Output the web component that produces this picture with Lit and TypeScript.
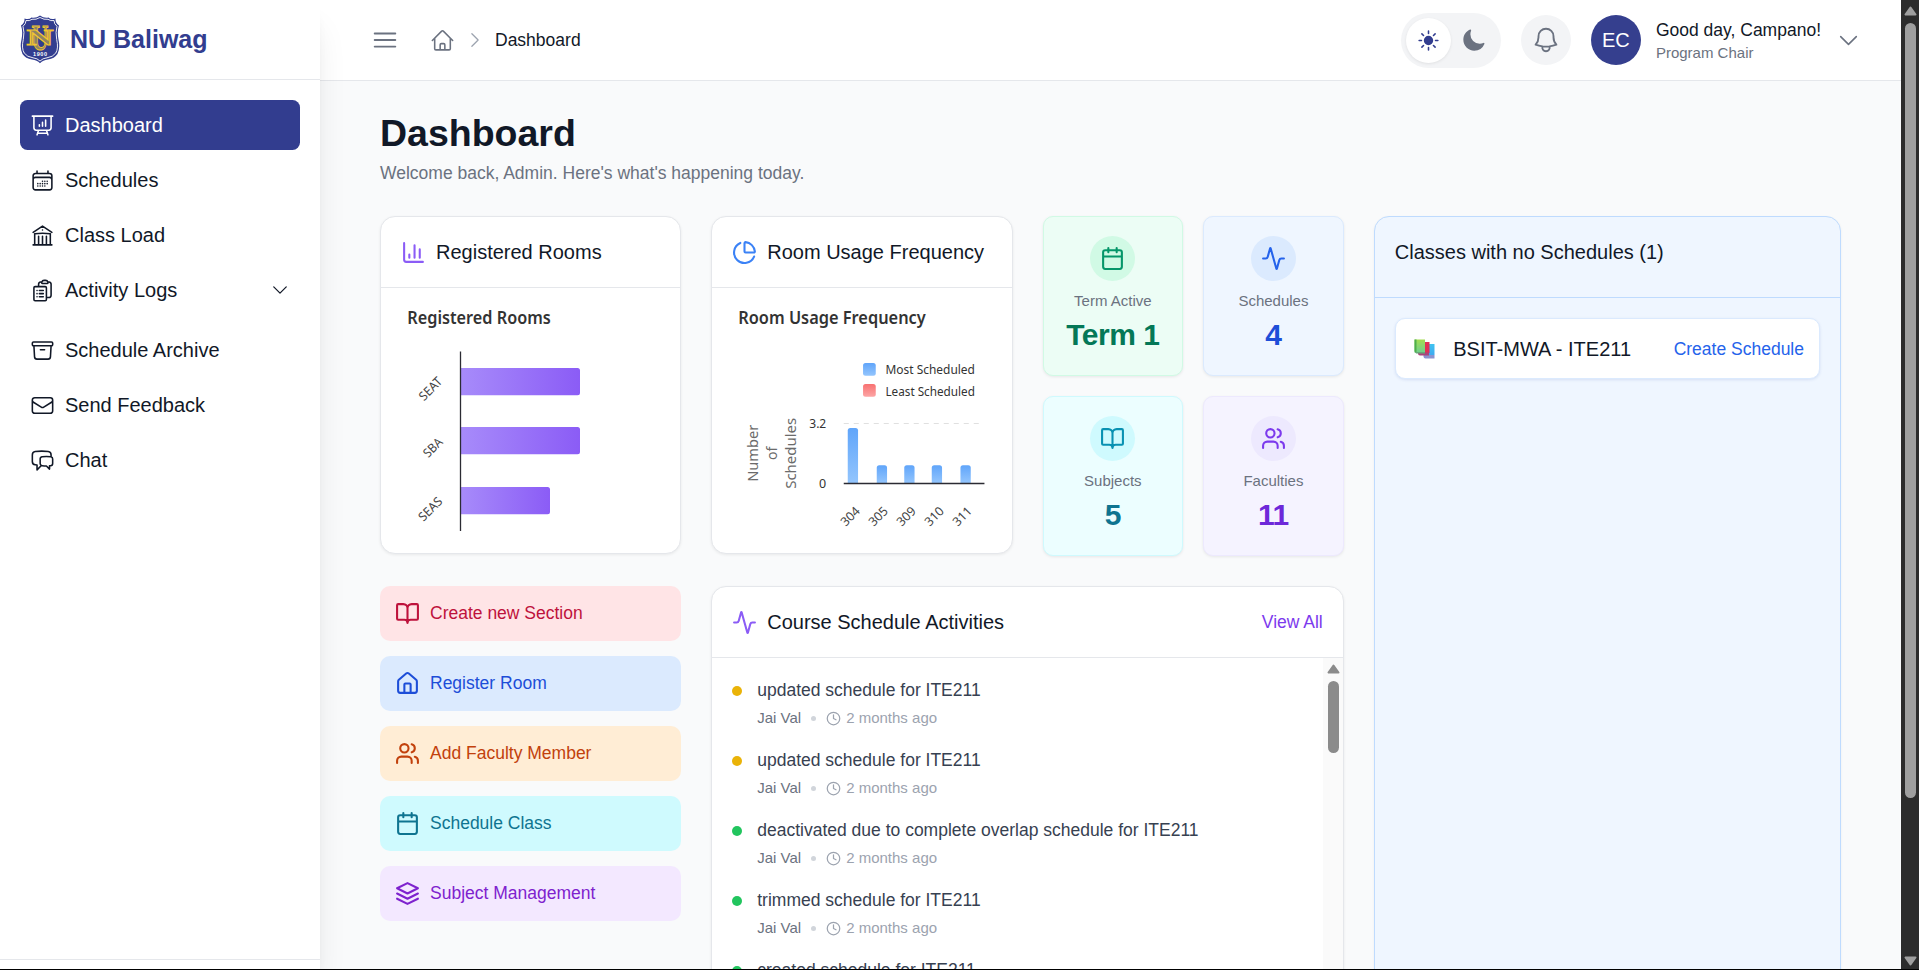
import { LitElement, html, css, svg, nothing } from "lit";
import { customElement, property } from "lit/decorators.js";

/* Outline icons, 24px grid, 1.5 stroke */
const hero: Record<string, string> = {
  presentation:
    "M3.75 3v11.25A2.25 2.25 0 0 0 6 16.5h2.25M3.75 3h-1.5m1.5 0h16.5m0 0h1.5m-1.5 0v11.25A2.25 2.25 0 0 1 18 16.5h-2.25m-7.5 0h7.5m-7.5 0-1 3m8.5-3 1 3m0 0 .5 1.5m-.5-1.5h-9.5m0 0-.5 1.5M9 11.25v1.5M12 9v3.75m3-6v6",
  calendarDays:
    "M6.75 3v2.25M17.25 3v2.25M3 18.75V7.5a2.25 2.25 0 0 1 2.25-2.25h13.5A2.25 2.25 0 0 1 21 7.5v11.25m-18 0A2.25 2.25 0 0 0 5.25 21h13.5A2.25 2.25 0 0 0 21 18.75m-18 0v-7.5A2.25 2.25 0 0 1 5.25 9h13.5A2.25 2.25 0 0 1 21 11.25v7.5m-9-6h.008v.008H12v-.008ZM12 15h.008v.008H12V15Zm0 2.25h.008v.008H12v-.008ZM9.75 15h.008v.008H9.75V15Zm0 2.25h.008v.008H9.75v-.008ZM7.5 15h.008v.008H7.5V15Zm0 2.25h.008v.008H7.5v-.008Zm6.75-4.5h.008v.008h-.008v-.008Zm0 2.25h.008v.008h-.008V15Zm0 2.25h.008v.008h-.008v-.008Zm2.25-4.5h.008v.008H16.5v-.008Zm0 2.25h.008v.008H16.5V15Z",
  library:
    "M12 21v-8.25M15.75 21v-8.25M8.25 21v-8.25M3 9l9-6 9 6m-1.5 12V10.332A48.36 48.36 0 0 0 12 9.75c-2.551 0-5.056.2-7.5.582V21M3 21h18M12 6.75h.008v.008H12V6.75Z",
  clipboard:
    "M9 12h3.75M9 15h3.75M9 18h3.75m3 .75H18a2.25 2.25 0 0 0 2.25-2.25V6.108c0-1.135-.845-2.098-1.976-2.192a48.424 48.424 0 0 0-1.123-.08m-5.801 0c-.065.21-.1.433-.1.664 0 .414.336.75.75.75h4.5a.75.75 0 0 0 .75-.75 2.25 2.25 0 0 0-.1-.664m-5.8 0A2.251 2.251 0 0 1 13.5 2.25H15c1.012 0 1.867.668 2.15 1.586m-5.8 0c-.376.023-.75.05-1.124.08C9.095 4.01 8.25 4.973 8.25 6.108V8.25m0 0H4.875c-.621 0-1.125.504-1.125 1.125v11.25c0 .621.504 1.125 1.125 1.125h9.75c.621 0 1.125-.504 1.125-1.125V9.375c0-.621-.504-1.125-1.125-1.125H8.25ZM6.75 12h.008v.008H6.75V12Zm0 3h.008v.008H6.75V15Zm0 3h.008v.008H6.75V18Z",
  archive:
    "m20.25 7.5-.625 10.632a2.25 2.25 0 0 1-2.247 2.118H6.622a2.25 2.25 0 0 1-2.247-2.118L3.75 7.5M10 11.25h4M3.375 7.5h17.25c.621 0 1.125-.504 1.125-1.125v-1.5c0-.621-.504-1.125-1.125-1.125H3.375c-.621 0-1.125.504-1.125 1.125v1.5c0 .621.504 1.125 1.125 1.125Z",
  envelope:
    "M21.75 6.75v10.5a2.25 2.25 0 0 1-2.25 2.25h-15a2.25 2.25 0 0 1-2.25-2.25V6.75m19.5 0A2.25 2.25 0 0 0 19.5 4.5h-15a2.25 2.25 0 0 0-2.25 2.25m19.5 0v.243a2.25 2.25 0 0 1-1.07 1.916l-7.5 4.615a2.25 2.25 0 0 1-2.36 0L3.32 8.91a2.25 2.25 0 0 1-1.07-1.916V6.75",
  chat:
    "M20.25 8.511c.884.284 1.5 1.128 1.5 2.097v4.286c0 1.136-.847 2.1-1.98 2.193-.34.027-.68.052-1.02.072v3.091l-3-3c-1.354 0-2.694-.055-4.02-.163a2.115 2.115 0 0 1-.825-.242m9.345-8.334a2.126 2.126 0 0 0-.476-.095 48.64 48.64 0 0 0-8.048 0c-1.131.094-1.976 1.057-1.976 2.192v4.286c0 .837.46 1.58 1.155 1.951m9.345-8.334V6.637c0-1.621-1.152-3.026-2.76-3.235A48.455 48.455 0 0 0 11.25 3c-2.115 0-4.198.137-6.24.402-1.608.209-2.76 1.614-2.76 3.235v6.226c0 1.621 1.152 3.026 2.76 3.235.577.075 1.157.14 1.74.194V21l4.155-4.155",
  home:
    "m2.25 12 8.954-8.955c.44-.439 1.152-.439 1.591 0L21.75 12M4.5 9.75v10.125c0 .621.504 1.125 1.125 1.125H9.75v-4.875c0-.621.504-1.125 1.125-1.125h2.25c.621 0 1.125.504 1.125 1.125V21h4.125c.621 0 1.125-.504 1.125-1.125V9.75M8.25 21h8.25",
  bars: "M3.75 6.75h16.5M3.75 12h16.5m-16.5 5.25h16.5",
  bell:
    "M14.857 17.082a23.848 23.848 0 0 0 5.454-1.31A8.967 8.967 0 0 1 18 9.75V9A6 6 0 0 0 6 9v.75a8.967 8.967 0 0 1-2.312 6.022c1.733.64 3.56 1.085 5.455 1.31m5.714 0a24.255 24.255 0 0 1-5.714 0m5.714 0a3 3 0 1 1-5.714 0",
  chevronDown: "m19.5 8.25-7.5 7.5-7.5-7.5",
  chevronRight: "m8.25 4.5 7.5 7.5-7.5 7.5",
};

/* Filled icons */
const solid: Record<string, string> = {
  sun: "M12 2.25a.75.75 0 0 1 .75.75v2.25a.75.75 0 0 1-1.5 0V3a.75.75 0 0 1 .75-.75ZM7.5 12a4.5 4.5 0 1 1 9 0 4.5 4.5 0 0 1-9 0ZM18.894 6.166a.75.75 0 0 0-1.06-1.06l-1.591 1.59a.75.75 0 1 0 1.06 1.061l1.591-1.59ZM21.75 12a.75.75 0 0 1-.75.75h-2.25a.75.75 0 0 1 0-1.5H21a.75.75 0 0 1 .75.75ZM17.834 18.894a.75.75 0 0 0 1.06-1.06l-1.59-1.591a.75.75 0 1 0-1.061 1.06l1.59 1.591ZM12 18a.75.75 0 0 1 .75.75V21a.75.75 0 0 1-1.5 0v-2.25A.75.75 0 0 1 12 18ZM7.758 17.303a.75.75 0 0 0-1.061-1.06l-1.591 1.59a.75.75 0 0 0 1.06 1.061l1.591-1.59ZM6 12a.75.75 0 0 1-.75.75H3a.75.75 0 0 1 0-1.5h2.25A.75.75 0 0 1 6 12ZM6.697 7.757a.75.75 0 0 0 1.06-1.06l-1.59-1.591a.75.75 0 0 0-1.061 1.06l1.59 1.591Z",
  moon: "M9.528 1.718a.75.75 0 0 1 .162.819A8.97 8.97 0 0 0 9 6a9 9 0 0 0 9 9 8.97 8.97 0 0 0 3.463-.69.75.75 0 0 1 .981.98 10.503 10.503 0 0 1-9.694 6.46c-5.799 0-10.5-4.7-10.5-10.5 0-4.368 2.667-8.112 6.46-9.694a.75.75 0 0 1 .818.162Z",
};

/* Outline icons, 24px grid, 2 stroke */
const lucide: Record<string, string> = {
  chart: "M3 3v16a2 2 0 0 0 2 2h16M18 17V9M13 17V5M8 17v-3",
  pie: "M21 12c.552 0 1.005-.449.95-.998a10 10 0 0 0-8.953-8.951c-.55-.055-.998.398-.998.95v8a1 1 0 0 0 1 1zM21.21 15.89A10 10 0 1 1 8 2.83",
  activity:
    "M22 12h-2.48a2 2 0 0 0-1.93 1.46l-2.35 8.36a.25.25 0 0 1-.48 0L9.24 2.18a.25.25 0 0 0-.48 0l-2.35 8.36A2 2 0 0 1 4.49 12H2",
  calendar:
    "M8 2v4M16 2v4M5 4h14a2 2 0 0 1 2 2v14a2 2 0 0 1-2 2H5a2 2 0 0 1-2-2V6a2 2 0 0 1 2-2zM3 10h18",
  book: "M12 7v14M3 18a1 1 0 0 1-1-1V4a1 1 0 0 1 1-1h5a4 4 0 0 1 4 4 4 4 0 0 1 4-4h5a1 1 0 0 1 1 1v13a1 1 0 0 1-1 1h-6a3 3 0 0 0-3 3 3 3 0 0 0-3-3z",
  users:
    "M16 21v-2a4 4 0 0 0-4-4H6a4 4 0 0 0-4 4v2M13 7a4 4 0 1 1-8 0a4 4 0 1 1 8 0M22 21v-2a4 4 0 0 0-3-3.87M16 3.13a4 4 0 0 1 0 7.75",
  house:
    "M15 21v-8a1 1 0 0 0-1-1h-4a1 1 0 0 0-1 1v8M3 10a2 2 0 0 1 .709-1.528l7-5.999a2 2 0 0 1 2.582 0l7 5.999A2 2 0 0 1 21 10v9a2 2 0 0 1-2 2H5a2 2 0 0 1-2-2z",
  layers: "M12 2 2 7l10 5 10-5-10-5zM2 17l10 5 10-5M2 12l10 5 10-5",
  clock: "M22 12a10 10 0 1 1-20 0a10 10 0 1 1 20 0M12 6v6l4 2",
};

const outline = (name: string, size = 25) => html`<svg width=${size} height=${size} viewBox="0 0 24 24"
  fill="none" stroke="currentColor" stroke-width="1.5" stroke-linecap="round" stroke-linejoin="round"><path d=${hero[name]}></path></svg>`;
const filled = (name: string, size = 25) => html`<svg width=${size} height=${size} viewBox="0 0 24 24"
  fill="currentColor" fill-rule="evenodd"><path d=${solid[name]}></path></svg>`;
const line = (name: string, size = 25) => html`<svg width=${size} height=${size} viewBox="0 0 24 24"
  fill="none" stroke="currentColor" stroke-width="2" stroke-linecap="round" stroke-linejoin="round"><path d=${lucide[name]}></path></svg>`;

const base = css`
  * { box-sizing: border-box; }
  svg { display: block; flex: none; }
`;

@customElement("app-sidebar")
class AppSidebar extends LitElement {
  static styles = [base, css`
    :host {
      display: flex; flex-direction: column; width: 320px; flex: none; background: #fff; color: #111827;
      position: relative; z-index: 2;
      box-shadow: 0 25px 31px -6px rgba(0, 0, 0, .1), 0 10px 12.5px -7.5px rgba(0, 0, 0, .1);
    }
    .brand {
      display: flex; align-items: center; gap: 10px; height: 80px; padding: 0 20px;
      border-bottom: 1px solid #e5e7eb; color: #323d8f; font-size: 25px; font-weight: 700;
    }
    .nav { flex: 1; display: flex; flex-direction: column; gap: 5px; padding: 20px; font-size: 20px; }
    .item { display: flex; align-items: center; gap: 10px; height: 50px; padding: 0 10px; border-radius: 7.5px; }
    .item.active { background: #323d8f; color: #fff; }
    .item.group { margin-bottom: 5px; }
    .label { flex: 1; }
    .foot { height: 10px; border-top: 1px solid #e5e7eb; }
  `];

  items = [
    ["presentation", "Dashboard"], ["calendarDays", "Schedules"], ["library", "Class Load"],
    ["clipboard", "Activity Logs"], ["archive", "Schedule Archive"], ["envelope", "Send Feedback"], ["chat", "Chat"],
  ];

  render() {
    return html`
      <div class="brand">
        <svg width="40" height="49" viewBox="0 0 40 49">
          <path d="M20 .5Q16 3.5 11.500 2.500Q9 5 4.500 3.500Q4.800 8 1 10.500Q3 16 1.600 24Q-.5 33 2.500 39Q5.500 43.500 12 44.500Q17 45 20 48.300Q23 45 28 44.500Q34.500 43.500 37.500 39Q40.500 33 38.400 24Q37 16 39 10.500Q35.200 8 35.500 3.500Q31 5 28.500 2.500Q24 3.500 20 .5Z" fill="#323d8f"></path>
          <path d="M20 2.500Q16 5 12 4.300Q9.500 6.300 6 5.500Q6 9 3 11.300Q4.700 17 3.300 24.500Q1.300 33 4.200 38Q7 42 13 42.800Q17.300 43.200 20 46Q22.700 43.200 27 42.800Q33 42 35.800 38Q38.700 33 36.700 24.500Q35.300 17 37 11.300Q34 9 34 5.500Q30.500 6.300 28 4.300Q24 5 20 2.500Z" fill="none" stroke="#fff" stroke-width=".9"></path>
          <g font-family="Liberation Serif, serif" font-weight="700" fill="#8f8560" stroke="#f2c530" stroke-width=".9">
            <text x="11.500" y="34.500" font-size="36" textLength="17" lengthAdjust="spacingAndGlyphs">U</text>
            <text x="6.500" y="30.300" font-size="23" textLength="27" lengthAdjust="spacingAndGlyphs">N</text>
          </g>
          <text x="20" y="41" font-family="Liberation Sans, sans-serif" font-weight="700" font-size="5.500" fill="#fff" text-anchor="middle" textLength="14">1900</text>
        </svg>
        <span>NU Baliwag</span>
      </div>
      <nav class="nav">
        ${this.items.map(([icon, label], i) => html`
          <div class="item ${i === 0 ? "active" : ""} ${i === 3 ? "group" : ""}">
            ${outline(icon)}<span class="label">${label}</span>${i === 3 ? outline("chevronDown", 20) : nothing}
          </div>`)}
      </nav>
      <div class="foot"></div>`;
  }
}

@customElement("app-topbar")
class AppTopbar extends LitElement {
  static styles = [base, css`
    :host {
      display: flex; align-items: center; height: 81px; flex: none; padding: 0 40px 0 50px;
      background: #fff; border-bottom: 1px solid #e5e7eb; color: #6b7280;
    }
    .crumb { display: flex; align-items: center; margin-left: 30px; flex: 1; font-size: 17.5px; color: #111827; }
    .crumb .home { color: #6b7280; margin-right: 10px; }
    .crumb .sep { color: #9ca3af; margin-right: 10px; }
    .toggle { display: flex; width: 100px; height: 55px; padding: 5px; border-radius: 28px; background: #f3f4f6; margin-right: 20px; }
    .knob { width: 45px; height: 45px; border-radius: 50%; display: grid; place-items: center; }
    .knob.on { background: #fff; color: #323d8f; box-shadow: 0 1px 3px rgba(0, 0, 0, .08); }
    .round { width: 50px; height: 50px; border-radius: 50%; display: grid; place-items: center; background: #f3f4f6; margin-right: 20px; }
    .round.avatar { background: #353f8e; color: #fff; font-size: 20px; margin-right: 15px; }
    .who { font-size: 15px; line-height: 20px; margin-right: 15px; }
    .who .hi { font-size: 17.5px; line-height: 25px; color: #111827; }
  `];
  render() {
    return html`
      ${outline("bars", 30)}
      <div class="crumb">
        <span class="home">${outline("home")}</span><span class="sep">${outline("chevronRight", 20)}</span>Dashboard
      </div>
      <div class="toggle"><span class="knob on">${filled("sun")}</span><span class="knob">${filled("moon")}</span></div>
      <div class="round">${outline("bell", 30)}</div>
      <div class="round avatar">EC</div>
      <div class="who"><div class="hi">Good day, Campano!</div><div>Program Chair</div></div>
      ${outline("chevronDown")}`;
  }
}

@customElement("rooms-chart")
class RoomsChart extends LitElement {
  static styles = css`
    :host { display: block; }
    svg { display: block; font-family: "Noto Sans", "Open Sans", sans-serif; font-size: 12.5px; fill: #444; }
    .title { font-size: 17px; font-weight: 600; fill: #333; }
  `;
  rows = [
    { name: "SEAT", w: 119, y: 368, cx: 430.3, cy: 388.7, len: 27 },
    { name: "SBA", w: 119, y: 427, cx: 432.7, cy: 447.5, len: 21.5 },
    { name: "SEAS", w: 89, y: 487, cx: 430.2, cy: 509, len: 28 },
  ];
  render() {
    return html`<svg width="299" height="265" viewBox="381 288 299 265">
      <defs><linearGradient id="violet"><stop offset="0" stop-color="#a78bfa"></stop><stop offset="1" stop-color="#8b5cf6"></stop></linearGradient></defs>
      <text class="title" x="407.300" y="324" textLength="143.500" lengthAdjust="spacingAndGlyphs">Registered Rooms</text>
      ${this.rows.map((r) => svg`
        <path d="M461 ${r.y}h${r.w - 2.5}a2.500 2.500 0 0 1 2.500 2.500v22.300a2.500 2.500 0 0 1 -2.500 2.500h${2.5 - r.w}z" fill="url(#violet)"></path>
        <text text-anchor="middle" y="4.500" textLength=${r.len} lengthAdjust="spacingAndGlyphs" transform="translate(${r.cx} ${r.cy}) rotate(-45)">${r.name}</text>`)}
      <path d="M460.500 351.500v179.500" stroke="#2b2b33" stroke-width="1.300"></path>
    </svg>`;
  }
}

@customElement("usage-chart")
class UsageChart extends LitElement {
  static styles = css`
    :host { display: block; }
    svg { display: block; font-family: "Noto Sans", "Open Sans", sans-serif; font-size: 12.5px; fill: #333; }
    .title { font-size: 17px; font-weight: 600; }
    .axis { font-size: 15px; fill: #6b6b6b; }
    .tick { fill: #444; }
  `;
  bars = [
    { name: "304", x: 848, y: 428 }, { name: "305", x: 877, y: 465.3 }, { name: "309", x: 904.5, y: 465.3 },
    { name: "310", x: 932, y: 465.3 }, { name: "311", x: 960.7, y: 465.3 },
  ];
  words = [
    { t: "Number", x: 752.7, len: 57 }, { t: "of", x: 771.3, len: 13.5 }, { t: "Schedules", x: 790.3, len: 71 },
  ];
  render() {
    return html`<svg width="299" height="265" viewBox="712.250 288 299 265">
      <defs>
        <linearGradient id="blue" x2="0" y2="1"><stop offset="0" stop-color="#60a5fa"></stop><stop offset="1" stop-color="#93c5fd"></stop></linearGradient>
        <linearGradient id="red" x2="0" y2="1"><stop offset="0" stop-color="#f87171"></stop><stop offset="1" stop-color="#fca5a5"></stop></linearGradient>
      </defs>
      <text class="title" x="738.500" y="324" textLength="187.500" lengthAdjust="spacingAndGlyphs">Room Usage Frequency</text>
      <rect x="863.300" y="363" width="12.700" height="12.700" rx="2.500" fill="url(#blue)"></rect>
      <rect x="863.300" y="384" width="12.700" height="12.700" rx="2.500" fill="url(#red)"></rect>
      <text x="885.700" y="374.300" textLength="89.500" lengthAdjust="spacingAndGlyphs">Most Scheduled</text>
      <text x="885.700" y="396" textLength="89.500" lengthAdjust="spacingAndGlyphs">Least Scheduled</text>
      ${this.words.map((w) => svg`<text class="axis" text-anchor="middle" y="5.500" textLength=${w.len} lengthAdjust="spacingAndGlyphs"
        transform="translate(${w.x} 453.300) rotate(-90)">${w.t}</text>`)}
      <text x="826.500" y="428.300" text-anchor="end" textLength="17" lengthAdjust="spacingAndGlyphs">3.2</text>
      <text x="826.500" y="488.300" text-anchor="end">0</text>
      <path d="M844 423.500h140" stroke="#e0e0e0" stroke-width="1.200" stroke-dasharray="5 5"></path>
      ${this.bars.map((b, i) => svg`
        <path d="M${b.x} 483v${b.y - 480.5}q0 -2.500 2.500 -2.500h5.300q2.500 0 2.500 2.500V483z" fill="url(#blue)"></path>
        <text class="tick" text-anchor="middle" y="4.500" transform="translate(${850.3 + i * 28} 516.300) rotate(-45)">${b.name}</text>`)}
      <path d="M844 483.500h140.700" stroke="#2b2b33" stroke-width="1.300"></path>
    </svg>`;
  }
}

@customElement("stat-card")
class StatCard extends LitElement {
  @property() icon = "";
  @property() label = "";
  @property() value = "";
  static styles = [base, css`
    :host {
      box-sizing: border-box; display: flex; flex-direction: column; align-items: center; height: 160px; padding-top: 19px;
      border: 1px solid; border-radius: 10px; box-shadow: 0 1px 3px rgba(0, 0, 0, .08);
    }
    .dot { width: 45px; height: 45px; border-radius: 50%; display: grid; place-items: center; margin-bottom: 10px; }
    .label { font-size: 15px; line-height: 20px; color: #6b7280; margin-bottom: 4px; }
    .value { font-size: 30px; line-height: 40px; font-weight: 700; letter-spacing: -.5px; }
    :host([tone="green"]) { background: #ecfdf5; border-color: #d1fae5; color: #047857; }
    :host([tone="green"]) .dot { background: #d1fae5; color: #059669; }
    :host([tone="blue"]) { background: #eff6ff; border-color: #dbeafe; color: #1d4ed8; }
    :host([tone="blue"]) .dot { background: #dbeafe; color: #2563eb; }
    :host([tone="cyan"]) { background: #ecfeff; border-color: #cffafe; color: #0e7490; }
    :host([tone="cyan"]) .dot { background: #cffafe; color: #0891b2; }
    :host([tone="violet"]) { background: #f5f3ff; border-color: #ede9fe; color: #6d28d9; }
    :host([tone="violet"]) .dot { background: #ede9fe; color: #7c3aed; }
  `];
  render() {
    return html`<div class="dot">${line(this.icon)}</div><div class="label">${this.label}</div><div class="value">${this.value}</div>`;
  }
}

@customElement("app-root")
class AppRoot extends LitElement {
  static styles = [base, css`
    :host {
      display: flex; flex-direction: column; height: 970px; overflow: hidden; background: #f9fafb;
      font-family: "Liberation Sans", Arial, sans-serif; color: #111827;
    }
    .frame { flex: 1; min-height: 0; display: flex; border-bottom: 1px solid #000; overflow: hidden; }
    .page { flex: 1; min-width: 0; display: flex; flex-direction: column; }
    main { flex: 1; min-height: 0; padding: 30px 60px 0; overflow: hidden; }
    h1 { margin: 0 0 5px; font-size: 37.5px; line-height: 45px; font-weight: 700; }
    .welcome { font-size: 17.5px; line-height: 25px; color: #6b7280; margin-bottom: 30px; }
    .grid {
      display: grid; grid-template-columns: 301.25px 301.25px 301.25px 1fr; grid-template-rows: 340px auto;
      gap: 30px; align-items: start;
    }
    .card { background: #fff; border: 1px solid #e5e7eb; border-radius: 15px; box-shadow: 0 1px 3px rgba(0, 0, 0, .07); }
    .chart { height: 338px; overflow: hidden; }
    .head { display: flex; align-items: center; gap: 10px; height: 71px; padding: 0 20px; border-bottom: 1px solid #e5e7eb; font-size: 20px; }
    .violet { color: #8b5cf6; }
    .blue { color: #3b82f6; }
    .all { margin-left: auto; font-size: 17.5px; color: #7c3aed; }
    .stats { display: grid; grid-template-columns: 1fr 1fr; gap: 20px; }
    .missing {
      grid-column: 4; grid-row: 1 / span 2; height: 900px; background: #eff6ff; border: 1px solid #bfdbfe;
      border-radius: 15px; box-shadow: 0 1px 3px rgba(0, 0, 0, .05);
    }
    .mhead { height: 81px; padding: 20px; line-height: 30px; font-size: 20px; border-bottom: 1px solid #bfdbfe; }
    .pending {
      display: flex; align-items: center; margin: 20px; height: 61px; padding: 1px 15px 0 18px; background: #fff;
      border: 1px solid #dbeafe; border-radius: 10px; box-shadow: 0 1px 3px rgba(30, 64, 175, .12); font-size: 20px;
    }
    .pending span { flex: 1; padding-left: 18.5px; }
    .pending a { font-size: 17.5px; color: #2563eb; }
    .links { display: flex; flex-direction: column; gap: 15px; }
    .link { display: flex; align-items: center; gap: 10px; height: 55px; padding: 0 15px; border-radius: 10px; font-size: 17.5px; }
    .rose { background: #ffe4e6; color: #be123c; }
    .sky { background: #dbeafe; color: #1d4ed8; }
    .orange { background: #ffedd5; color: #c2410c; }
    .cyan { background: #cffafe; color: #0e7490; }
    .purple { background: #f3e8ff; color: #7e22ce; }
    .feed { grid-column: 2 / span 2; height: 520px; overflow: hidden; }
    .body { display: flex; height: 448px; }
    .list { flex: 1; padding: 20px; display: flex; flex-direction: column; gap: 15px; }
    .entry { display: flex; gap: 15px; height: 55px; }
    .bullet { width: 10px; height: 10px; border-radius: 50%; background: #eab308; margin-top: 8px; }
    .bullet.ok { background: #22c55e; }
    .what { font-size: 17.5px; line-height: 25px; color: #374151; margin-bottom: 5px; }
    .meta { display: flex; align-items: center; font-size: 15px; line-height: 20px; color: #9ca3af; }
    .meta .name { color: #6b7280; }
    .meta .sep { width: 5px; height: 5px; border-radius: 50%; background: #d1d5db; margin: 0 10px; }
    .meta svg { margin-right: 5px; }
    .scroll { width: 20px; background: #fafafa; padding: 6px 0 0 1px; display: flex; flex-direction: column; align-items: center; gap: 7px; }
    .scroll i { width: 11px; height: 72px; border-radius: 6px; background: #8b8b8b; }
    .bar { width: 18px; flex: none; background: #2c2c2c; display: flex; flex-direction: column; align-items: center; padding: 6px 0 3px 1px; }
    .bar i { width: 11px; height: 775px; margin: 7px 0 auto; border-radius: 6px; background: #9f9f9f; }
  `];

  links = [
    ["rose", "book", "Create new Section"], ["sky", "house", "Register Room"], ["orange", "users", "Add Faculty Member"],
    ["cyan", "calendar", "Schedule Class"], ["purple", "layers", "Subject Management"],
  ];
  feed = [
    ["", "updated schedule for ITE211"], ["", "updated schedule for ITE211"],
    ["ok", "deactivated due to complete overlap schedule for ITE211"], ["ok", "trimmed schedule for ITE211"],
    ["ok", "created schedule for ITE211"],
  ];

  arrow(color: string, down = false) {
    return html`<svg width="13" height="10" viewBox="0 0 13 10"><path d=${down ? "M1.500 1.500h10L6.500 8.500z" : "M1.500 8.500h10L6.500 1.500z"}
      fill=${color} stroke=${color} stroke-width="2" stroke-linejoin="round"></path></svg>`;
  }

  render() {
    return html`
      <div class="frame">
        <app-sidebar></app-sidebar>
        <div class="page">
          <app-topbar></app-topbar>
          <main>
            <h1>Dashboard</h1>
            <div class="welcome">Welcome back, Admin. Here's what's happening today.</div>
            <div class="grid">
              <section class="card chart">
                <div class="head"><span class="violet">${line("chart")}</span>Registered Rooms</div>
                <rooms-chart></rooms-chart>
              </section>
              <section class="card chart">
                <div class="head"><span class="blue">${line("pie")}</span>Room Usage Frequency</div>
                <usage-chart></usage-chart>
              </section>
              <div class="stats">
                <stat-card tone="green" icon="calendar" label="Term Active" value="Term 1"></stat-card>
                <stat-card tone="blue" icon="activity" label="Schedules" value="4"></stat-card>
                <stat-card tone="cyan" icon="book" label="Subjects" value="5"></stat-card>
                <stat-card tone="violet" icon="users" label="Faculties" value="11"></stat-card>
              </div>
              <section class="missing">
                <div class="mhead">Classes with no Schedules (1)</div>
                <div class="pending">
                  <svg width="21" height="20" viewBox="0 0 21 20">
                    <defs>
                      <linearGradient id="g" x2="0" y2="1"><stop offset="0" stop-color="#a3dc50"></stop><stop offset="1" stop-color="#6fcf8d"></stop></linearGradient>
                      <linearGradient id="b" x2="0" y2="1"><stop offset="0" stop-color="#3fc4f0"></stop><stop offset="1" stop-color="#3fa9f0"></stop></linearGradient>
                    </defs>
                    <path d="M10 5h10.500v11H10z" fill="url(#b)"></path>
                    <path d="M9.500 16h11v3.500h-9q-2 0-2-2z" fill="#8b93cf"></path>
                    <path d="M5 3h10.500v11H5z" fill="#e02f55"></path>
                    <path d="M4 13.500h11v3H6q-2 0-2-2z" fill="#a8447a"></path>
                    <path d="M.500.500H11v13H.500z" fill="url(#g)"></path>
                    <path d="M.500.500h2v13.500q-2 0-2-2z" fill="#4fae4c"></path>
                    <path d="M1.500 13H11v1.500H2z" fill="#68a878"></path>
                  </svg>
                  <span>BSIT-MWA - ITE211</span><a>Create Schedule</a>
                </div>
              </section>
              <div class="links">
                ${this.links.map(([tone, icon, label]) => html`<div class="link ${tone}">${line(icon)}${label}</div>`)}
              </div>
              <section class="card feed">
                <div class="head"><span class="violet">${line("activity")}</span>Course Schedule Activities<span class="all">View All</span></div>
                <div class="body">
                  <div class="list">
                    ${this.feed.map(([state, text]) => html`
                      <div class="entry">
                        <div class="bullet ${state}"></div>
                        <div>
                          <div class="what">${text}</div>
                          <div class="meta"><span class="name">Jai Val</span><span class="sep"></span>${line("clock", 15)}2 months ago</div>
                        </div>
                      </div>`)}
                  </div>
                  <div class="scroll">${this.arrow("#8b8b8b")}<i></i></div>
                </div>
              </section>
            </div>
          </main>
        </div>
        <div class="bar">${this.arrow("#9f9f9f")}<i></i>${this.arrow("#9f9f9f", true)}</div>
      </div>`;
  }
}
